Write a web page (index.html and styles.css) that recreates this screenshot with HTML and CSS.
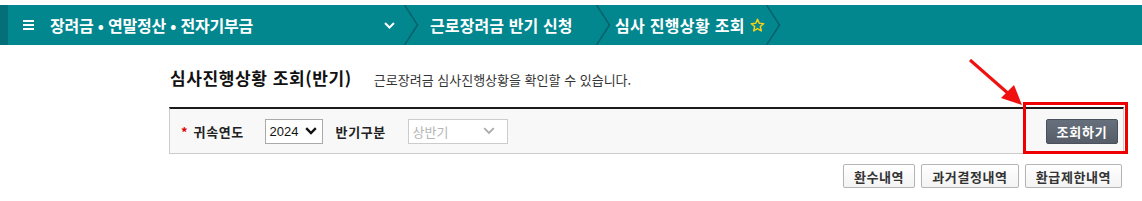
FILE: index.html
```html
<!DOCTYPE html>
<html lang="ko">
<head>
    <meta charset="UTF-8" />
    <title>심사 진행상황 조회</title>
    <link rel="stylesheet" href="styles.css">
</head>
<body>
    <!-- 상단 경로 -->
    <div class="location">
        <div class="loc-strip"></div>
        <div class="loc-item loc-first">
            <span class="menu-icon"><i></i><i></i><i></i></span>
            <span class="loc-text">장려금 • 연말정산 • 전자기부금</span>
            <svg class="loc-down" width="11" height="7" viewBox="0 0 11 7"><path d="M1 1 L5.5 5.5 L10 1" fill="none" stroke="#fff" stroke-width="2"/></svg>
        </div>
        <svg class="loc-sep" width="15" height="40" viewBox="0 0 15 40"><path d="M0.5 0 L13.5 20 L0.5 40" fill="none" stroke="#08606a" stroke-width="1.5"/></svg>
        <div class="loc-item loc-second">
            <span class="loc-text">근로장려금 반기 신청</span>
        </div>
        <svg class="loc-sep" width="15" height="40" viewBox="0 0 15 40"><path d="M0.5 0 L13.5 20 L0.5 40" fill="none" stroke="#08606a" stroke-width="1.5"/></svg>
        <div class="loc-item loc-third">
            <span class="loc-text">심사 진행상황 조회</span>
            <svg class="star" width="15" height="15" viewBox="0 0 16 16"><path d="M8 1.3 L9.9 5.6 L14.6 6 L11 9.1 L12.1 13.8 L8 11.3 L3.9 13.8 L5 9.1 L1.4 6 L6.1 5.6 Z" fill="none" stroke="#f5cf1c" stroke-width="1.6" stroke-linejoin="round"/></svg>
        </div>
        <svg class="loc-sep" width="15" height="40" viewBox="0 0 15 40"><path d="M0.5 0 L13.5 20 L0.5 40" fill="none" stroke="#08606a" stroke-width="1.5"/></svg>
    </div>

    <div class="content">
        <div class="title-row">
            <h2>심사진행상황 조회(반기)</h2>
            <p class="title-desc">근로장려금 심사진행상황을 확인할 수 있습니다.</p>
        </div>

        <!-- 조회 조건 -->
        <div class="search-box">
            <div class="search-fields">
                <span class="req">*</span>
                <label class="field-label">귀속연도</label>
                <div class="select">
                    <span>2024</span>
                    <svg width="12" height="8" viewBox="0 0 12 8"><path d="M1.2 1.2 L6 6 L10.8 1.2" fill="none" stroke="#111" stroke-width="2.4"/></svg>
                </div>
                <label class="field-label label-half">반기구분</label>
                <div class="select select-disabled">
                    <span>상반기</span>
                    <svg width="12" height="8" viewBox="0 0 12 8"><path d="M1.2 1.2 L6 6 L10.8 1.2" fill="none" stroke="#aaa" stroke-width="1.8"/></svg>
                </div>
            </div>
            <button class="btn-search">조회하기</button>
            <div class="highlight-box"></div>
            <svg class="pointer-arrow" width="56" height="48" viewBox="0 0 56 48">
                <path d="M2 2 L42 37" stroke="#f01010" stroke-width="3" fill="none"/>
                <path d="M54 47 L33 40 L46 27 Z" fill="#f01010"/>
            </svg>
        </div>

        <div class="btn-row">
            <button class="btn btn-w72">환수내역</button>
            <button class="btn btn-w98">과거결정내역</button>
            <button class="btn btn-w97">환급제한내역</button>
        </div>
    </div>
</body>
</html>
```

FILE: styles.css
```css
body {
    margin: 0;
    padding: 0;
    background: #ffffff;
    font-family: "Noto Sans CJK KR", "Noto Sans", sans-serif;
    color: #222;
}

/* location bar */
.location {
    display: flex;
    align-items: center;
    margin-top: 5px;
    height: 40px;
    background: #02878f;
    color: #ffffff;
}
.loc-strip {
    width: 8px;
    height: 100%;
    background: #046f78;
}
.loc-item {
    display: flex;
    align-items: center;
    height: 100%;
}
.loc-text {
    font-size: 16px;
    font-weight: bold;
    letter-spacing: -0.2px;
    white-space: nowrap;
}
.loc-first {
    width: 396px;
    padding-left: 15px;
    box-sizing: border-box;
}
.menu-icon {
    display: flex;
    flex-direction: column;
    gap: 2px;
    width: 11px;
    margin-right: 16px;
}
.menu-icon i {
    display: block;
    height: 2px;
    background: #ffffff;
}
.loc-down {
    margin-left: auto;
    margin-right: 9px;
}
.loc-sep {
    flex: none;
    display: block;
}
.loc-second {
    padding-left: 11px;
    width: 177px;
    box-sizing: border-box;
}
.loc-second .loc-text {
    letter-spacing: 0.1px;
}
.loc-third {
    padding-left: 4px;
    width: 155px;
    box-sizing: border-box;
}
.loc-third .loc-text {
    letter-spacing: 0.3px;
}
.star {
    flex: none;
    margin-left: 5px;
}

/* content */
.content {
    padding: 0 18px 0 169px;
}
.title-row {
    display: flex;
    align-items: baseline;
    margin-top: 20px;
    height: 40px;
}
.title-row h2 {
    margin: 0 0 0 1px;
    font-size: 17px;
    font-weight: bold;
    color: #111;
    letter-spacing: 0.6px;
}
.title-desc {
    margin: 0 0 0 22px;
    font-size: 13px;
    color: #333;
}

.search-box {
    position: relative;
    display: flex;
    align-items: center;
    justify-content: space-between;
    height: 44px;
    margin-top: 2px;
    background: #f8f8f8;
    border: 1px solid #cccccc;
    border-top: 2px solid #1a1a1a;
}
.search-fields {
    display: flex;
    align-items: center;
    padding-left: 11px;
}
.req {
    color: #e00000;
    font-size: 13px;
    font-weight: bold;
    margin-right: 6px;
}
.field-label {
    font-size: 13px;
    font-weight: bold;
    color: #222;
    width: 71px;
    letter-spacing: 0.6px;
}
.label-half {
    width: 72px;
    margin-left: 13px;
}
.select {
    display: flex;
    align-items: center;
    justify-content: space-between;
    box-sizing: border-box;
    width: 58px;
    height: 25px;
    padding: 0 5px 0 4px;
    background: #ffffff;
    border: 1px solid #aaaaaa;
    font-family: "Liberation Sans", sans-serif;
    font-size: 13px;
    color: #111;
}
.select-disabled {
    width: 100px;
    padding-right: 12px;
    border-color: #cccccc;
    color: #b5b5b5;
    font-family: "Noto Sans CJK KR", sans-serif;
}
.btn-search {
    margin-right: 5px;
    width: 72px;
    height: 25px;
    border: 1px solid #4a515c;
    border-radius: 2px;
    background: linear-gradient(#66707c, #565d68);
    color: #ffffff;
    font-family: "Noto Sans CJK KR", sans-serif;
    font-size: 13px;
    font-weight: bold;
    letter-spacing: 0.8px;
    padding: 0;
}
.highlight-box {
    position: absolute;
    right: -5px;
    top: -7px;
    width: 99px;
    height: 46px;
    border: 3px solid #ee0000;
}
.pointer-arrow {
    position: absolute;
    left: 798px;
    top: -51px;
}

.btn-row {
    display: flex;
    justify-content: flex-end;
    gap: 6px;
    margin-top: 10px;
    padding-right: 2px;
}
.btn {
    height: 24px;
    padding: 0;
    background: linear-gradient(#ffffff, #f3f3f3);
    border: 1px solid #b5b5b5;
    border-radius: 2px;
    box-shadow: 0 1px 1px rgba(0, 0, 0, 0.12);
    font-family: "Noto Sans CJK KR", sans-serif;
    font-size: 13px;
    font-weight: bold;
    letter-spacing: 0.6px;
    color: #333;
}
.btn-w72 {
    width: 72px;
}
.btn-w98 {
    width: 98px;
}
.btn-w97 {
    width: 97px;
}
```
